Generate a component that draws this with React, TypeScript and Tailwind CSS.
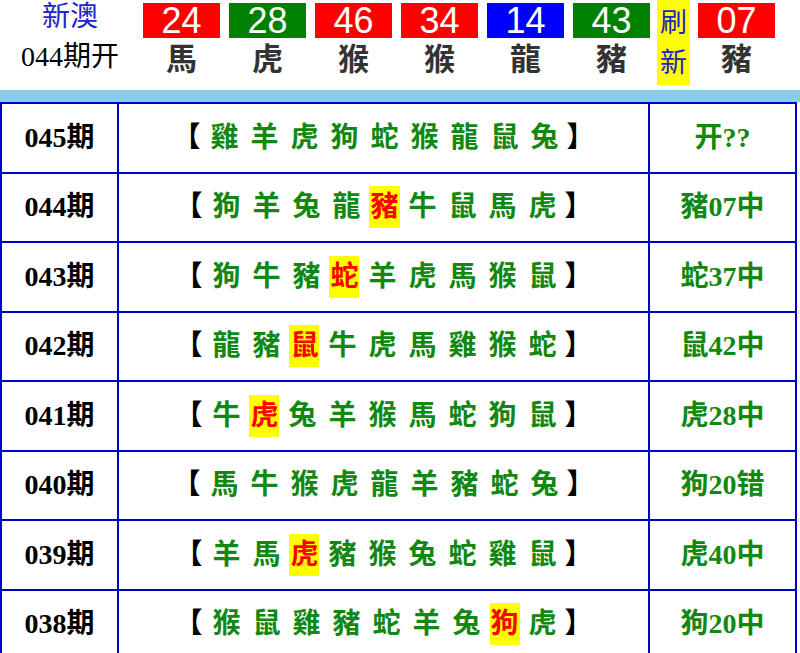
const balls = [
  { n: '24', z: '馬', c: 'bg-[#ff0000]' },
  { n: '28', z: '虎', c: 'bg-[#008000]' },
  { n: '46', z: '猴', c: 'bg-[#ff0000]' },
  { n: '34', z: '猴', c: 'bg-[#ff0000]' },
  { n: '14', z: '龍', c: 'bg-[#0000ff]' },
  { n: '43', z: '豬', c: 'bg-[#008000]' },
]

const rows = [
  { p: '045期', z: '雞羊虎狗蛇猴龍鼠兔', hit: -1, r: '开??' },
  { p: '044期', z: '狗羊兔龍豬牛鼠馬虎', hit: 4, r: '豬07中' },
  { p: '043期', z: '狗牛豬蛇羊虎馬猴鼠', hit: 3, r: '蛇37中' },
  { p: '042期', z: '龍豬鼠牛虎馬雞猴蛇', hit: 2, r: '鼠42中' },
  { p: '041期', z: '牛虎兔羊猴馬蛇狗鼠', hit: 1, r: '虎28中' },
  { p: '040期', z: '馬牛猴虎龍羊豬蛇兔', hit: -1, r: '狗20错' },
  { p: '039期', z: '羊馬虎豬猴兔蛇雞鼠', hit: 2, r: '虎40中' },
  { p: '038期', z: '猴鼠雞豬蛇羊兔狗虎', hit: 7, r: '狗20中' },
]

const sans = "font-[family-name:Liberation_Sans,Noto_Sans_CJK_SC,sans-serif]"
const serif = "font-[family-name:Liberation_Serif,Noto_Sans_CJK_SC,serif]"

export default function App() {
  return (
    <div className={`w-[800px] h-[653px] overflow-hidden bg-white ${sans}`}>
      {/* header */}
      <div className="flex h-[90px]">
        <div className="w-[140px] flex flex-col items-center">
          <div className="text-[28px] leading-[34px] text-[#2222cc]">新澳</div>
          <div className={`mt-[6px] text-[28px] leading-[34px] text-black ${serif}`}>044期开</div>
        </div>
        <div className="flex gap-[9px] pl-[3px]">
          {balls.map((b, i) => (
            <div key={i} className="w-[77px] flex flex-col items-center">
              <div className={`mt-[3px] w-full h-[35px] ${b.c} text-white text-[36px] leading-[35px] text-center`}>{b.n}</div>
              <div className="mt-[3px] text-[31px] leading-[38px] font-bold text-[#333]">{b.z}</div>
            </div>
          ))}
          <div className="w-[33px] -ml-[2px] h-[85px] bg-[#ffff00] text-[#2222cc] text-[27px] leading-[40px] text-center flex flex-col justify-center">
            <span>刷</span><span>新</span>
          </div>
          <div className="w-[77px] flex flex-col items-center -ml-[1px]">
            <div className="mt-[3px] w-full h-[35px] bg-[#ff0000] text-white text-[36px] leading-[35px] text-center">07</div>
            <div className="mt-[3px] text-[31px] leading-[38px] font-bold text-[#333]">豬</div>
          </div>
        </div>
      </div>
      <div className="h-[12px] bg-[#87ceeb]" />
      {/* table */}
      <div className="w-[797px] border-l-2 border-t-2 border-[#0000cc]">
        {rows.map((row, i) => (
          <div key={i} className="flex h-[69.5px] border-b-2 border-[#0000cc]">
            <div className={`w-[117px] shrink-0 border-r-2 border-[#0000cc] flex items-center justify-center text-[28px] font-bold text-black ${serif}`}>
              {row.p}
            </div>
            <div className="w-[531px] shrink-0 border-r-2 border-[#0000cc] flex items-center justify-center text-[28px] font-bold">
              <span className="text-black mr-[4px]">【</span>
              {row.z.split('').map((ch, j) =>
                j === row.hit ? (
                  <span key={j} className="mx-[3px] px-[1px] bg-[#ffff00] text-[#ff0000]">{ch}</span>
                ) : (
                  <span key={j} className="mx-[6px] text-[#118811]">{ch}</span>
                )
              )}
              <span className="text-black ml-[2px]">】</span>
            </div>
            <div className={`flex-1 border-r-2 border-[#0000cc] flex items-center justify-center text-[28px] font-bold text-[#118811] ${serif}`}>
              {row.r}
            </div>
          </div>
        ))}
      </div>
    </div>
  )
}
